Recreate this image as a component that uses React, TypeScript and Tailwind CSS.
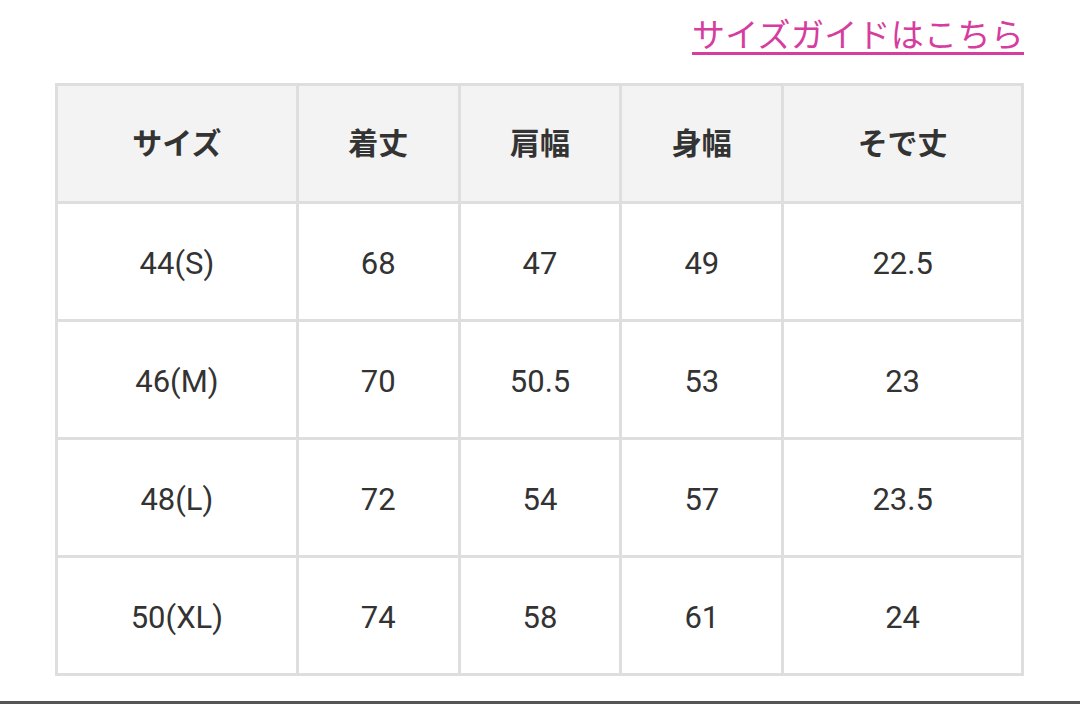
import React from "react";

const rows = [
  ["44(S)", "68", "47", "49", "22.5"],
  ["46(M)", "70", "50.5", "53", "23"],
  ["48(L)", "72", "54", "57", "23.5"],
  ["50(XL)", "74", "58", "61", "24"],
];
const heads = ["サイズ", "着丈", "肩幅", "身幅", "そで丈"];
const widths = ["w-[241px]", "w-[162px]", "w-[162px]", "w-[162px]", "w-[240px]"];

export default function App() {
  return (
    <div className="w-[1080px] h-[704px] bg-white flex flex-col">
      <div className="flex-1 pl-[55px] pr-[56px]">
        <div className="h-[83px] flex justify-end items-start pt-[13px]">
          <a
            href="#"
            className="text-[33px] leading-[40px] tracking-[0.3px] text-[#d63d9e] underline decoration-[3px] underline-offset-[5px] [font-family:'Noto_Sans_CJK_JP',sans-serif]"
          >
            サイズガイドはこちら
          </a>
        </div>
        <table className="table-fixed border-collapse border-[3px] border-[#dedede]">
          <thead>
            <tr className="h-[118px] bg-[#f3f3f3]">
              {heads.map((h, i) => (
                <th
                  key={h}
                  className={`${widths[i]} border-[3px] border-[#dedede] pb-[5px] text-[30px] font-bold text-[#333333] text-center align-middle [font-family:'Noto_Sans_CJK_JP',sans-serif]`}
                >
                  {h}
                </th>
              ))}
            </tr>
          </thead>
          <tbody>
            {rows.map((r, ri) => (
              <tr key={ri} className="h-[118px] bg-white">
                {r.map((c, ci) => (
                  <td
                    key={ci}
                    className="border-[3px] border-[#dedede] pt-[5px] text-[31px] text-[#333333] text-center align-middle [font-family:Roboto,sans-serif]"
                  >
                    {c}
                  </td>
                ))}
              </tr>
            ))}
          </tbody>
        </table>
      </div>
      <div className="h-[3px] bg-[#555555]" />
    </div>
  );
}
